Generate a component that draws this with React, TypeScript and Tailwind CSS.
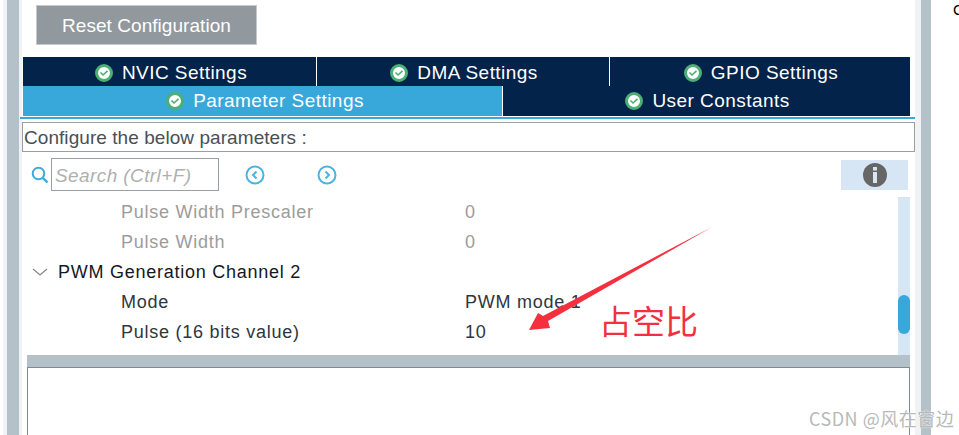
const CheckIcon = () => (
  <svg width="18" height="18" viewBox="0 0 18 18" className="shrink-0">
    <circle cx="9" cy="9" r="7.5" fill="#ffffff" stroke="#4caf74" strokeWidth="3" />
    <path d="M5.5 8.5 L8 11 L12.5 6.8" fill="none" stroke="#4caf74" strokeWidth="1.6" />
  </svg>
);

const Tab = ({ label, active, className }: { label: string; active?: boolean; className?: string }) => (
  <div className={`flex items-center justify-center gap-[9px] text-white text-[19px] tracking-[0.45px] ${active ? "bg-[#38a8db]" : "bg-[#03234b]"} ${className ?? ""}`}>
    <CheckIcon />
    <span>{label}</span>
  </div>
);

const ArrowBtn = ({ d }: { d: string }) => (
  <svg width="22" height="22" viewBox="0 0 22 22" className="shrink-0">
    <circle cx="11" cy="11" r="8.5" fill="none" stroke="#4db3e2" strokeWidth="2" />
    <path d={d} fill="none" stroke="#4db3e2" strokeWidth="2" />
  </svg>
);

const rows = [
  { label: "Pulse Width Prescaler", value: "0", muted: true },
  { label: "Pulse Width", value: "0", muted: true },
  { label: "PWM Generation Channel 2", group: true },
  { label: "Mode", value: "PWM mode 1" },
  { label: "Pulse (16 bits value)", value: "10" },
];

export default function App() {
  return (
    <div className="relative flex h-[435px] w-[959px] overflow-hidden bg-white font-['Liberation_Sans',sans-serif]">
      {/* left splitter */}
      <div className="ml-[3px] w-[4px] bg-[#f0f2f4]" />
      <div className="w-[12px] bg-[#b5c1c8]" />
      <div className="w-[3px] bg-[#f0f2f4]" />

      <div className="flex w-[893px] flex-col">
        <button className="ml-[14px] mt-[5px] h-[40px] w-[221px] border border-[#c4cacd] bg-[#91989e] pt-[2px] text-center text-[19px] tracking-[0.05px] text-white">
          Reset Configuration
        </button>

        <div className="ml-px mt-[12px] w-[887px]">
          <div className="grid h-[28px] grid-cols-[294px_293px_300px]">
            <Tab label="NVIC Settings" className="border-r border-white pl-[3px] pt-[2px]" />
            <Tab label="DMA Settings" className="border-r border-white pl-[2px] pt-[2px]" />
            <Tab label="GPIO Settings" className="pl-[2px] pt-[2px]" />
          </div>
          <div className="mt-px grid h-[30px] grid-cols-[480px_407px]">
            <Tab label="Parameter Settings" active className="border-r border-white pl-[5px]" />
            <Tab label="User Constants" className="pl-[2px]" />
          </div>
        </div>
        <div className="-ml-[2px] mt-px h-[2px] w-[897px] bg-[#38a8db]" />

        <div className="mt-[3px] flex h-[30px] items-center border border-[#9a9fa3] pl-[1px] pt-[2px] text-[19px] tracking-[0.06px] text-[#4a4f55]">
          Configure the below parameters :
        </div>

        <div className="relative mt-[6px] flex h-[33px] items-center">
          <svg width="20" height="20" viewBox="0 0 20 20" className="ml-[8px] mr-px shrink-0">
            <circle cx="8.5" cy="8.5" r="5.8" fill="none" stroke="#3fa9dc" strokeWidth="2" />
            <path d="M12.8 12.8 L17.5 17.5" stroke="#3fa9dc" strokeWidth="2.4" />
          </svg>
          <div className="flex h-[33px] w-[168px] items-center border border-[#9a9fa3] pl-[3px] pt-[3px] text-[19px] italic tracking-[0.4px] text-[#b0b0b0]">
            Search (Ctrl+F)
          </div>
          <div className="ml-[25px]">
            <ArrowBtn d="M12.5 7.5 L9 11 L12.5 14.5" />
          </div>
          <div className="ml-[50px]">
            <ArrowBtn d="M9.5 7.5 L13 11 L9.5 14.5" />
          </div>
          <div className="ml-auto mr-[7px] flex h-[30px] w-[67px] items-center justify-center bg-[#d6e6f4]">
            <svg width="26" height="26" viewBox="0 0 26 26">
              <circle cx="13" cy="13" r="12" fill="#666666" />
              <rect x="11" y="5" width="4" height="3.5" fill="#d6e6f4" />
              <rect x="11" y="10" width="4" height="11" fill="#d6e6f4" />
            </svg>
          </div>
        </div>

        <div className="mt-[6px] flex h-[158px] w-[888px] pl-[5px]">
          <div className="flex-1">
            {rows.map((r) => (
              <div
                key={r.label}
                className={`flex h-[30px] items-center text-[18px] tracking-[0.75px] ${r.muted ? "text-[#9c9c9c]" : r.group ? "text-[#15181c]" : "text-[#2e3640]"}`}
              >
                {r.group ? (
                  <>
                    <svg width="16" height="10" viewBox="0 0 16 10" className="ml-[5px] mr-[10px] shrink-0">
                      <path d="M1 2 L8 8 L15 2" fill="none" stroke="#8a8a8a" strokeWidth="1.3" />
                    </svg>
                    <span>{r.label}</span>
                  </>
                ) : (
                  <>
                    <span className="ml-[94px] w-[344px]">{r.label}</span>
                    <span>{r.value}</span>
                  </>
                )}
              </div>
            ))}
          </div>
          <div className="flex w-[12px] flex-col bg-[#d6e6f4] pt-[98px]">
            <div className="h-[39px] rounded-[6px] bg-[#38a8db]" />
          </div>
        </div>

        <div className="ml-[5px] h-[12px] w-[883px] bg-[#b5c1c8]" />
        <div className="ml-[5px] w-[883px] flex-1 border-x border-t border-[#7f8a91]" />
      </div>

      {/* right splitter */}
      <div className="w-[6px] bg-[#f0f2f4]" />
      <div className="w-[10px] bg-[#b5c1c8]" />

      <span className="absolute left-[953px] top-[-1px] text-[15px] text-black">C</span>

      {/* annotation */}
      <svg width="959" height="435" viewBox="0 0 959 435" className="pointer-events-none absolute left-0 top-0">
        <polygon points="712,227 548,321 550,328 529,330 538,313 543,316" fill="#f4303f" />
      </svg>
      <span className="absolute left-[599px] top-[298px] text-[33px] leading-[44px] text-[#f4303f] font-['Noto_Sans_CJK_SC',sans-serif]">
        占空比
      </span>
      <span className="absolute left-[809px] top-[405px] text-[18px] leading-[26px] tracking-[0.5px] text-[#b9b9b9] font-['Noto_Sans_CJK_SC',sans-serif] [text-shadow:0_0_2px_#ffffff]">
        CSDN @风在窗边
      </span>
    </div>
  );
}
